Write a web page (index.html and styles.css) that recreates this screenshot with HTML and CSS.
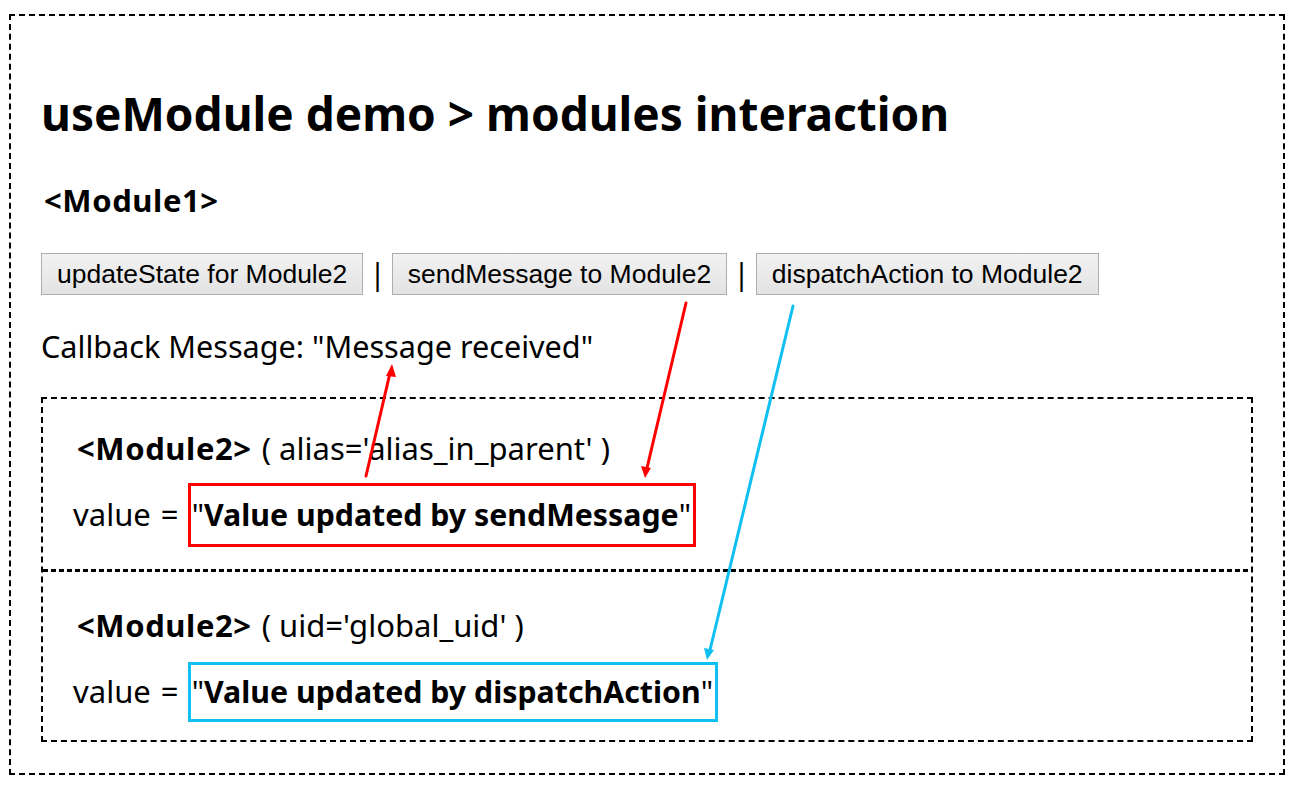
FILE: index.html
```html
<!DOCTYPE html>
<html lang="en">
<head>
<meta charset="utf-8">
<title>useModule demo</title>
<link rel="stylesheet" href="styles.css">
</head>
<body>
<div class="page">
  <h1 class="title">useModule demo &gt; modules interaction</h1>
  <div class="module-name">&lt;Module1&gt;</div>
  <div class="actions">
    <button class="btn" type="button">updateState for Module2</button>
    <span class="sep">|</span>
    <button class="btn" type="button">sendMessage to Module2</button>
    <span class="sep">|</span>
    <button class="btn" type="button">dispatchAction to Module2</button>
  </div>
  <p class="callback">Callback Message: "Message received"</p>
  <div class="children">
    <section class="child child-first">
      <div class="child-head"><b class="tag">&lt;Module2&gt;</b> ( alias='alias_in_parent' )</div>
      <div class="value-line">value = <span class="hl hl-red">"<b>Value updated by sendMessage</b>"</span></div>
    </section>
    <div class="divider"></div>
    <section class="child child-second">
      <div class="child-head"><b class="tag">&lt;Module2&gt;</b> ( uid='global_uid' )</div>
      <div class="value-line">value = <span class="hl hl-blue">"<b>Value updated by dispatchAction</b>"</span></div>
    </section>
  </div>
</div>
<svg class="arrows" width="1294" height="786" viewBox="0 0 1294 786" aria-hidden="true">
  <g stroke-width="3" stroke-linecap="round" fill="none">
    <line x1="686" y1="303" x2="647" y2="468" stroke="#ff0000"/>
    <line x1="366" y1="476" x2="390" y2="373" stroke="#ff0000"/>
    <line x1="793" y1="306" x2="710" y2="650" stroke="#11c0f2"/>
  </g>
  <polygon points="645,478 641,466 651,468" fill="#ff0000"/>
  <polygon points="392,364 386,376 396,377" fill="#ff0000"/>
  <polygon points="707,660 704,648 714,650" fill="#11c0f2"/>
</svg>
</body>
</html>
```
FILE: styles.css
```css
html, body {
  margin: 0;
  padding: 0;
  background: #ffffff;
}

body {
  font-family: "Noto Sans", "Open Sans", sans-serif;
  color: #000;
  position: relative;
  width: 1294px;
  height: 786px;
  overflow: hidden;
}

.page {
  margin: 14px 9px 0 9px;
  border: 2px dashed #000;
  padding: 0 30px 30px 30px;
  box-sizing: border-box;
  width: 1276px;
  height: 761px;
}

.title {
  margin: 69px 0 0 0;
  font-size: 46px;
  line-height: 56px;
  font-weight: 700;
}

.module-name {
  margin-top: 39px;
  font-size: 31px;
  line-height: 40px;
  font-weight: 700;
  letter-spacing: 0.6px;
  padding-left: 3px;
}

.actions {
  margin-top: 33px;
  display: flex;
  align-items: center;
  gap: 6px;
}

.btn {
  font-family: "Liberation Sans", Arial, sans-serif;
  font-size: 26.5px;
  color: #000;
  height: 42px;
  padding: 0 15px;
  border: 1px solid #adadad;
  border-radius: 0;
  background: linear-gradient(#f2f2f2, #e3e3e3);
  margin: 0;
}

.sep {
  font-size: 30px;
  line-height: 40px;
}

.callback {
  margin: 31px 0 0 0;
  font-size: 30.6px;
  line-height: 40px;
}

.children {
  margin-top: 31px;
  border: 2px dashed #000;
}

.child {
  padding-left: 30px;
}

.child-first {
  padding-top: 29px;
  padding-bottom: 22px;
}

.child-second {
  padding-top: 33px;
  padding-bottom: 18px;
}

.child-second .value-line {
  margin-top: 17px;
}

.divider {
  height: 3px;
  background: repeating-linear-gradient(to right, #000 0 5px, transparent 5px 8px);
}

.child-head {
  font-size: 31px;
  line-height: 40px;
}

.tag {
  font-size: 31px;
  letter-spacing: 0.6px;
  padding-left: 4px;
  margin-right: 2px;
}

.value-line {
  margin-top: 15px;
  font-size: 31px;
  line-height: 40px;
  word-spacing: 2px;
}

.hl {
  display: inline-block;
  font-size: 30.3px;
  word-spacing: 0;
  padding: 9px 2px 9px 1px;
  border: 3px solid;
  margin-left: -1px;
}

.hl-red {
  border-color: #ff0000;
}

.hl-blue {
  border-color: #11c0f2;
  padding-top: 7px;
  padding-bottom: 7px;
}

.arrows {
  position: absolute;
  left: 0;
  top: 0;
  pointer-events: none;
}
```
